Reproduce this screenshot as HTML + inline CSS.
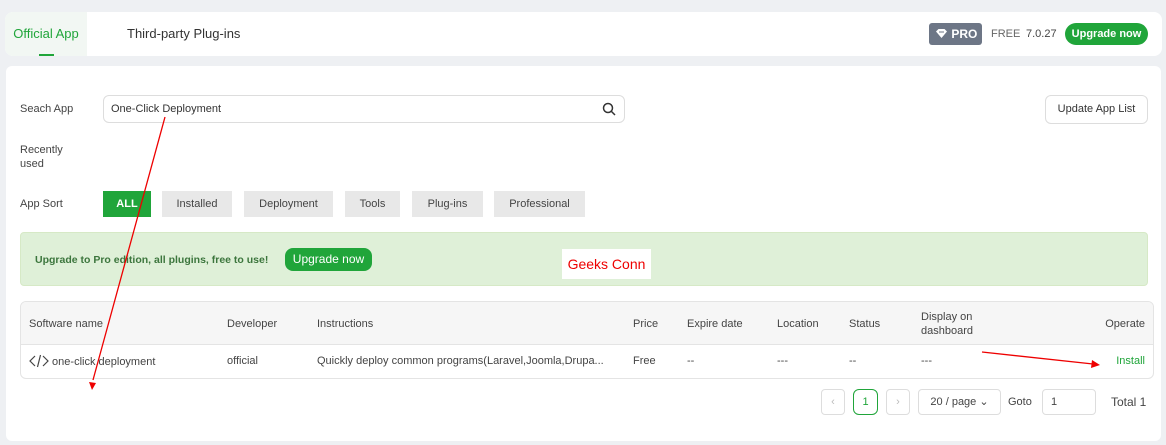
<!DOCTYPE html>
<html><head><meta charset="utf-8"><style>
*{box-sizing:border-box;margin:0;padding:0}
body{width:1166px;height:445px;background:#eef0f3;font-family:"Liberation Sans",sans-serif;font-size:12px;color:#333;position:relative;overflow:hidden}
.top{position:absolute;left:5px;top:12px;width:1157px;height:44px;background:#fff;border-radius:8px}
.tab1{position:absolute;left:0;top:0;width:82px;height:44px;background:#f2f7f3;border-radius:8px 0 0 8px;color:#20a53a;font-size:13px;line-height:44px;text-align:center}
.tab1:after{content:"";position:absolute;left:34px;bottom:0;width:15px;height:2px;background:#20a53a}
.tab2{position:absolute;left:122px;top:0;line-height:44px;font-size:13px;color:#333}
.pro{position:absolute;left:924px;top:11px;width:53px;height:22px;background:#6d7686;border-radius:3px;color:#fff;font-weight:bold;font-size:12px;line-height:22px;padding-left:6px}
.t{position:absolute;top:11px;line-height:22px;font-size:11px;color:#666}
.up{position:absolute;left:1060px;top:11px;width:83px;height:22px;background:#20a53a;border-radius:11px;color:#fff;font-weight:bold;font-size:11px;line-height:22px;text-align:center}
.main{position:absolute;left:6px;top:66px;width:1155px;height:375px;background:#fff;border-radius:6px}
.lbl{position:absolute;left:14px;font-size:11px;color:#444;line-height:14px}
.search{position:absolute;left:97px;top:29px;width:522px;height:28px;border:1px solid #ddd;border-radius:6px;font-size:11px;line-height:26px;padding-left:7px;color:#333}
.btn{position:absolute;top:125px;height:26px;background:#e8e8e8;font-size:11px;line-height:26px;text-align:center;color:#444}
.upd{position:absolute;left:1039px;top:29px;width:103px;height:29px;border:1px solid #ddd;border-radius:6px;font-size:11px;line-height:27px;text-align:center}
.banner{position:absolute;left:14px;top:166px;width:1128px;height:54px;background:#dff0d8;border:1px solid #d6e9c6;border-radius:4px}
.tbl{position:absolute;left:14px;top:235px;width:1134px;height:78px;border:1px solid #e4e4e4;border-radius:6px;overflow:hidden}
.th{position:absolute;top:0;left:0;width:100%;height:43px;background:#f6f6f6;border-bottom:1px solid #e4e4e4}
.c{position:absolute;font-size:11px;color:#444;line-height:14px}
.pg{position:absolute;top:323px;height:26px;border:1px solid #ddd;border-radius:4px;font-size:11px;line-height:24px;text-align:center;color:#bbb}
</style></head><body>
<div class="top">
<div class="tab1">Official App</div>
<div class="tab2">Third-party Plug-ins</div>
<div class="pro"><svg width="13" height="11" viewBox="0 0 13 11" style="vertical-align:-1px"><path d="M1 3.5L3.5 1h6L12 3.5 6.5 10z" fill="#fff"/><path d="M4 4h5" stroke="#6d7686" stroke-width="1"/></svg> PRO</div>
<div class="t" style="left:986px">FREE</div>
<div class="t" style="left:1021px;color:#444">7.0.27</div>
<div class="up">Upgrade now</div>
</div>
<div class="main">
<div class="lbl" style="top:36px">Seach App</div>
<div class="search">One-Click Deployment<svg width="14" height="14" viewBox="0 0 14 14" style="position:absolute;right:8px;top:6px"><circle cx="6" cy="6" r="4.5" fill="none" stroke="#333" stroke-width="1.5"/><path d="M9.5 9.5L13 13" stroke="#333" stroke-width="1.5"/></svg></div>
<div class="upd">Update App List</div>
<div class="lbl" style="top:77px">Recently<br>used</div>
<div class="lbl" style="top:131px">App Sort</div>
<div class="btn" style="left:97px;width:48px;background:#20a53a;color:#fff;font-weight:bold">ALL</div>
<div class="btn" style="left:156px;width:70px">Installed</div>
<div class="btn" style="left:238px;width:89px">Deployment</div>
<div class="btn" style="left:339px;width:55px">Tools</div>
<div class="btn" style="left:406px;width:71px">Plug-ins</div>
<div class="btn" style="left:488px;width:91px">Professional</div>
<div class="banner">
<div class="c" style="left:14px;top:20px;color:#3c763d;font-weight:bold;font-size:10.5px">Upgrade to Pro edition, all plugins, free to use!</div>
<div style="position:absolute;left:264px;top:15px;width:87px;height:23px;background:#20a53a;border-radius:8px;color:#fff;font-size:12px;line-height:23px;text-align:center">Upgrade now</div>
<div style="position:absolute;left:541px;top:16px;width:89px;height:30px;background:#fff;color:#e00;font-size:14px;line-height:30px;text-align:center">Geeks Conn</div>
</div>
<div class="tbl">
<div class="th"></div>
<div class="c" style="left:8px;top:15px">Software name</div>
<div class="c" style="left:206px;top:15px">Developer</div>
<div class="c" style="left:296px;top:15px">Instructions</div>
<div class="c" style="left:612px;top:15px">Price</div>
<div class="c" style="left:666px;top:15px">Expire date</div>
<div class="c" style="left:756px;top:15px">Location</div>
<div class="c" style="left:828px;top:15px">Status</div>
<div class="c" style="left:900px;top:8px">Display on<br>dashboard</div>
<div class="c" style="right:8px;top:15px">Operate</div>
<div class="c" style="left:8px;top:52px"><svg width="20" height="14" viewBox="0 0 20 14" style="vertical-align:-3px"><path d="M6 2L1 7l5 5M14 2l5 5-5 5M11.5 1L8.5 13" fill="none" stroke="#444" stroke-width="1.2"/></svg> one-click deployment</div>
<div class="c" style="left:206px;top:52px">official</div>
<div class="c" style="left:296px;top:52px">Quickly deploy common programs(Laravel,Joomla,Drupa...</div>
<div class="c" style="left:612px;top:52px">Free</div>
<div class="c" style="left:666px;top:52px">--</div>
<div class="c" style="left:756px;top:52px">---</div>
<div class="c" style="left:828px;top:52px">--</div>
<div class="c" style="left:900px;top:52px">---</div>
<div class="c" style="right:8px;top:52px;color:#20a53a">Install</div>
</div>
<div class="pg" style="left:815px;width:24px">‹</div>
<div class="pg" style="left:847px;width:25px;border-color:#20a53a;color:#20a53a;border-radius:6px">1</div>
<div class="pg" style="left:880px;width:24px">›</div>
<div class="pg" style="left:912px;width:83px;color:#444">20 / page ⌄</div>
<div class="c" style="left:1002px;top:329px">Goto</div>
<div class="pg" style="left:1036px;width:54px;text-align:left;padding-left:8px;color:#444">1</div>
<div class="c" style="left:1105px;top:329px;font-size:12px">Total 1</div>
</div>
<svg width="1166" height="445" style="position:absolute;left:0;top:0">
<path d="M165 117L93 380" stroke="#e00" stroke-width="1.3"/><path d="M89 382l3 8 4-7z" fill="#e00"/>
<path d="M982 352L1093 364" stroke="#e00" stroke-width="1.3"/><path d="M1092 360l8 5-9 3z" fill="#e00"/>
</svg>
</body></html>
